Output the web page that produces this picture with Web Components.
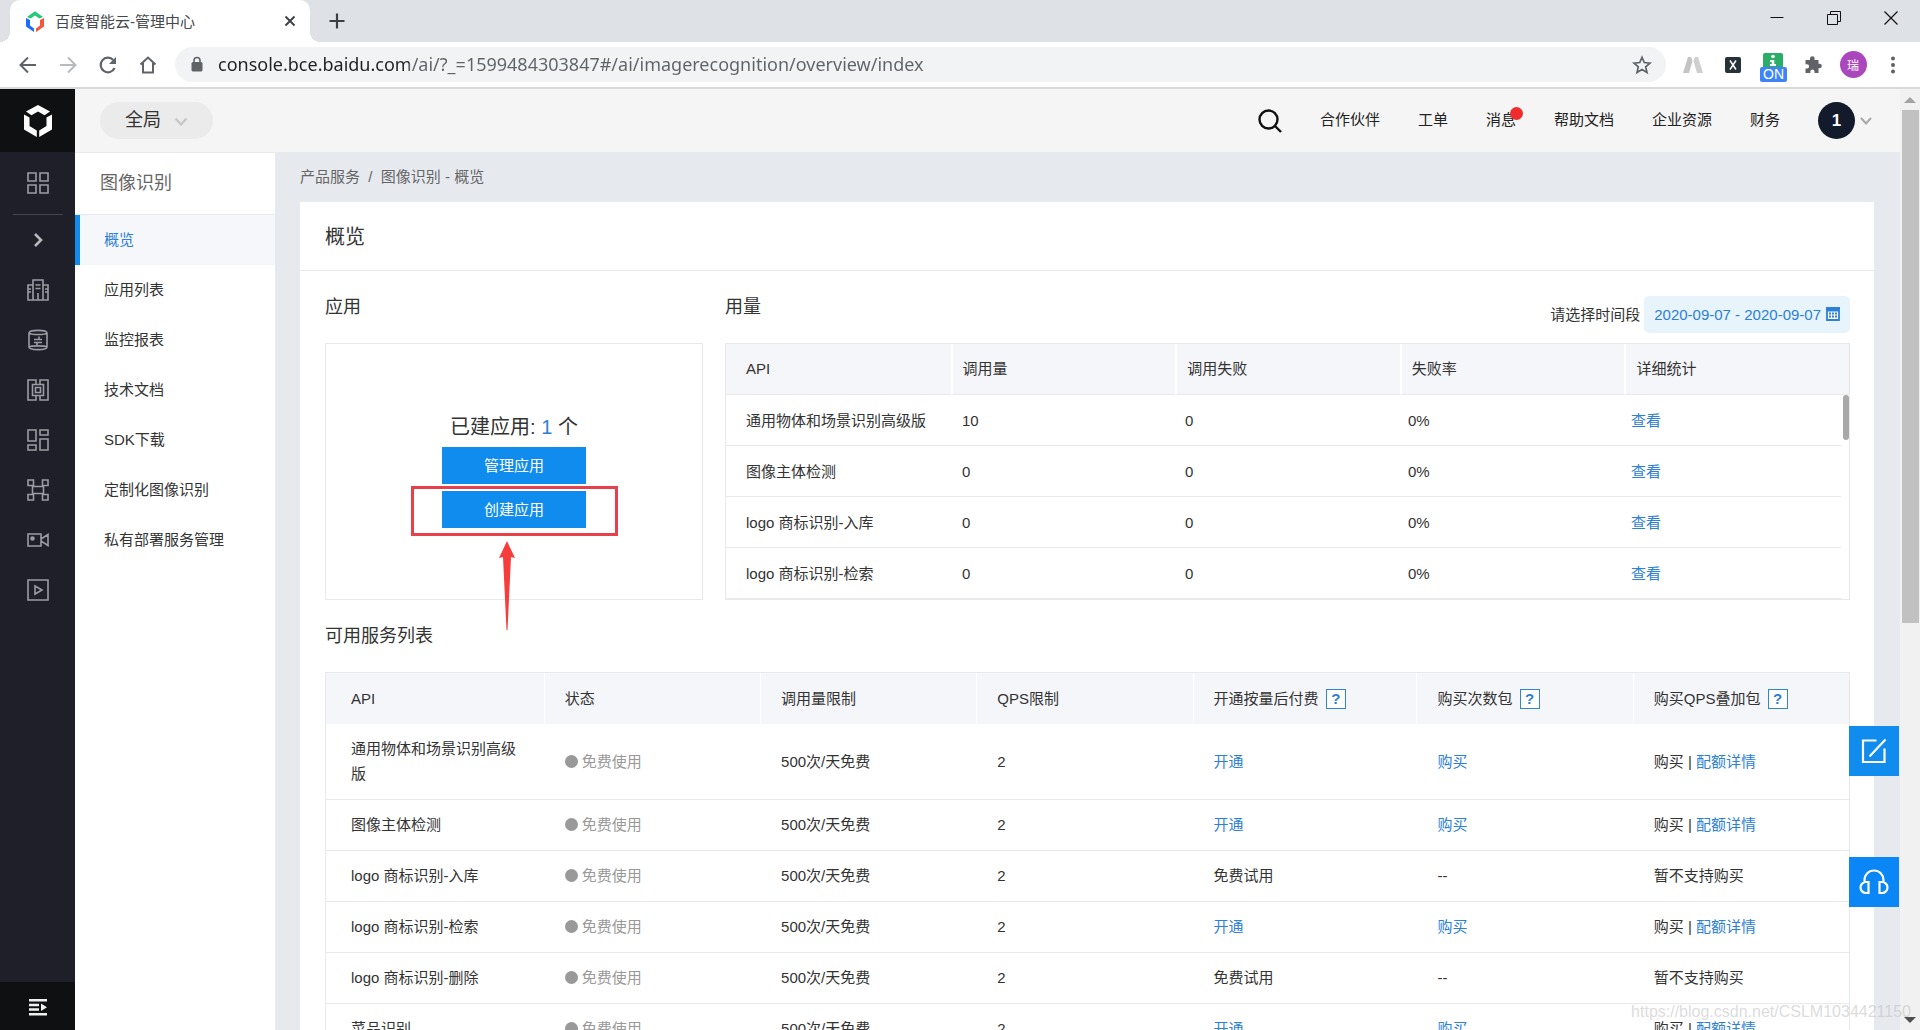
<!DOCTYPE html>
<html lang="zh-CN">
<head>
<meta charset="utf-8">
<title>百度智能云-管理中心</title>
<style>
  html, body { height: 100%; margin: 0; }
  body {
    font-family: "Liberation Sans", "Noto Sans CJK SC", sans-serif;
    font-size: 15px; line-height: 25px; color: #333;
    overflow: hidden; background: #fff;
    --blue: #108cee; --link: #2c80d8; --line: #e8e9eb; --head: #f5f6fa;
  }
</style>
</head>
<body>
<console-app></console-app>

<script>
const define = (name, html, setup) => {
  const template = document.createElement('template');
  template.innerHTML = html;
  customElements.define(name, class extends HTMLElement {
    constructor() {
      super();
      this.attachShadow({ mode: 'open' }).append(template.content.cloneNode(true));
    }
    connectedCallback() { if (setup) setup(this, this.shadowRoot); }
  });
};

/* ---------- browser window ---------- */
define('tab-strip', `
<style>
  :host { display: flex; height: 42px; background: #dee1e6; align-items: center; color: #3c4043; }
  button { border: 0; background: none; padding: 0; display: grid; place-items: center; color: inherit; }
  .tab { position: relative; margin-left: 10px; width: 300px; height: 42px; box-sizing: border-box; background: #fff;
    border-radius: 10px 10px 0 0; display: flex; align-items: center; padding: 0 11px 0 15px; gap: 10px; }
  .tab::before, .tab::after { content: ""; position: absolute; bottom: 0; width: 10px; height: 10px; }
  .tab::before { left: -10px; background: radial-gradient(circle at 0 0, transparent 10px, #fff 10px); }
  .tab::after { right: -10px; background: radial-gradient(circle at 100% 0, transparent 10px, #fff 10px); }
  .title { flex: 1; white-space: nowrap; color: #45484c; }
  .new { margin-left: 17px; width: 20px; height: 20px; }
  .win { margin-left: auto; display: flex; padding: 0 1px 6px 0; }
  .win button { width: 57px; height: 36px; color: #111; }
</style>
<div class="tab">
  <svg width="20" height="22" viewBox="0 0 20 22"><path d="M2 7 10 1.200 18 7 14.500 8.500 10 5.500 5.500 8.500Z" fill="#24c878"/><path d="M1 8 5 10V15.500L9 18.500V22L1 16.500Z" fill="#1a6dff"/><path d="M19 8 15 10V15.500L11 18.500V22L19 16.500Z" fill="#f5553a"/></svg>
  <span class="title">百度智能云-管理中心</span>
  <button aria-label="关闭标签页"><svg width="18" height="18" viewBox="0 0 18 18"><path d="M4.500 4.500 13.500 13.500M13.500 4.500 4.500 13.500" stroke="currentColor" stroke-width="1.900"/></svg></button>
</div>
<button class="new" aria-label="新标签页"><svg width="18" height="18" viewBox="0 0 18 18"><path d="M9 1.500V16.500M1.500 9H16.500" stroke="currentColor" stroke-width="2.200"/></svg></button>
<div class="win">
  <button aria-label="最小化"><svg width="14" height="14" viewBox="0 0 14 14"><path d="M.5 6.500H13.500" stroke="currentColor"/></svg></button>
  <button aria-label="还原"><svg width="14" height="14" viewBox="0 0 14 14" fill="none" stroke="currentColor"><path d="M.5 3.500H10.500V13.500H.5ZM3.500 3.500V.5H13.500V10.500H10.500"/></svg></button>
  <button aria-label="关闭"><svg width="14" height="14" viewBox="0 0 14 14"><path d="M.5 .5 13.500 13.500M13.500 .5 .5 13.500" stroke="currentColor" stroke-width="1.200"/></svg></button>
</div>`);

define('address-bar', `
<style>
  :host { display: flex; height: 45px; align-items: center; background: #fff; border-bottom: 2px solid #d8d9db; color: #5f6368; padding-left: 8px; padding-right: 7px; }
  button { border: 0; background: none; padding: 0; width: 40px; height: 35px; display: grid; place-items: center; color: inherit; }
  .off { color: #b8babd; }
  .box { flex: 1; display: flex; align-items: center; height: 35px; margin-left: 7px; margin-right: 7px; border-radius: 18px; background: #f1f3f4; padding: 0 4px 0 15px; gap: 14px; }
  input { flex: 1; min-width: 0; border: 0; outline: 0; padding: 0 0 2px; height: 33px; font: 18px "Noto Sans", "Open Sans", sans-serif;
    color: #5f6368; background: linear-gradient(90deg, #202124 191px, #5f6368 191px) text; -webkit-text-fill-color: transparent; }
  .on { position: relative; }
  .badge { position: absolute; left: 7px; top: 20px; width: 27px; height: 15px; border-radius: 2px; background: #3f83f8; color: #fff; font: 14px/15px "Liberation Sans", sans-serif; text-align: center; }
  .me span { width: 27px; height: 27px; border-radius: 50%; background: #ab47bc; color: #fff; font: 12px/27px "Noto Sans CJK SC", sans-serif; }
</style>
<button aria-label="后退"><svg width="20" height="20" viewBox="0 0 20 20" fill="none" stroke="currentColor" stroke-width="2"><path d="M18 10H3M10 2.500 2.500 10 10 17.500"/></svg></button>
<button class="off" aria-label="前进"><svg width="20" height="20" viewBox="0 0 20 20" fill="none" stroke="currentColor" stroke-width="2"><path d="M2 10H17M10 2.500 17.500 10 10 17.500"/></svg></button>
<button aria-label="重新加载"><svg width="20" height="20" viewBox="0 0 20 20" fill="none" stroke="currentColor" stroke-width="2.200"><path d="M16.600 13A7.300 7.300 0 1 1 15.300 5"/><path d="M18 2V9H11Z" fill="currentColor" stroke="none"/></svg></button>
<button aria-label="主页"><svg width="18" height="20" viewBox="0 0 18 20" fill="none" stroke="currentColor" stroke-width="2"><path d="M1.500 9.500 9 2.500 16.500 9.500M4 8V17.500H14V8"/></svg></button>
<div class="box">
  <svg width="14" height="17" viewBox="0 0 14 17"><rect x="1.500" y="6" width="11" height="9.500" rx="1.500" fill="currentColor"/><path d="M4 6.500V4.500A3 3 0 0 1 10 4.500V6.500" fill="none" stroke="currentColor" stroke-width="1.600"/></svg>
  <input aria-label="地址" value="console.bce.baidu.com/ai/?_=1599484303847#/ai/imagerecognition/overview/index">
  <button aria-label="收藏"><svg width="20" height="20" viewBox="0 0 20 20" fill="none" stroke="currentColor" stroke-width="1.700"><path d="M10 2.300 12.300 7.500 18 8.100 13.700 11.900 15 17.500 10 14.500 5 17.500 6.300 11.900 2 8.100 7.700 7.500Z"/></svg></button>
</div>
<button aria-label="扩展程序"><svg width="20" height="18" viewBox="0 0 20 18"><path d="M5 1H8L9.500 5 6 17H0Z" fill="#c4c4c4"/><path d="M15 1H12L10.500 5 14 17H20Z" fill="#cfcfcf"/></svg></button>
<button aria-label="扩展程序 X"><svg width="16" height="16" viewBox="0 0 16 16"><rect width="16" height="16" rx="2" fill="#263238"/><path d="M5 3.500 11 12.500M11 3.500 5 12.500" stroke="#fff" stroke-width="1.500"/></svg></button>
<button class="on" aria-label="扩展程序 ON"><svg width="20" height="24" viewBox="0 0 20 24"><rect y="0" width="20" height="18" rx="2" fill="#2aad66"/><circle cx="10" cy="3.500" r="1.800" fill="#fff"/><path d="M7 7H11.300V11H13V13H7V11H8.700V9H7Z" fill="#fff"/></svg><span class="badge">ON</span></button>
<button aria-label="扩展"><svg width="20" height="20" viewBox="0 0 20 20"><path d="M7 3.500A2.300 2.300 0 0 1 11.600 3.500V5H15.500V8.700H16.500A2.300 2.300 0 0 1 16.500 13.300H15.500V18H11.500V16.500A2.100 2.100 0 0 0 7.300 16.500V18H2.500V13.500H4A2.100 2.100 0 0 0 4 9.300H2.500V5H7Z" fill="currentColor"/></svg></button>
<button class="me" aria-label="个人资料"><span>瑞</span></button>
<button aria-label="菜单"><svg width="6" height="18" viewBox="0 0 6 18" fill="currentColor"><circle cx="3" cy="2.500" r="2"/><circle cx="3" cy="9" r="2"/><circle cx="3" cy="15.500" r="2"/></svg></button>`);

define('window-scrollbar', `
<style>
  :host { display: flex; flex-direction: column; width: 20px; background: #f1f1f1; align-items: center; box-sizing: border-box; }
  i { display: block; width: 0; height: 0; border: 6px solid transparent; }
  .up { border-top: 0; border-bottom-color: #a3a3a3; margin: 8px 0 7px; }
  .down { border-bottom: 0; border-top-color: #505050; margin: 7px 0; }
  .track { flex: 1; width: 17px; }
  .thumb { height: 57%; background: #c1c1c1; }
</style>
<i class="up"></i><div class="track"><div class="thumb"></div></div><i class="down"></i>`);

/* ---------- console shell ---------- */
define('icon-rail', `
<style>
  :host { display: flex; flex-direction: column; width: 75px; background: #1e1f29; color: #9b9ca3; }
  a { color: inherit; display: grid; place-items: center; height: 50px; }
  .logo { height: 63px; background: #0f1012; color: #fff; }
  .grid { height: 62px; }
  hr { width: 50px; height: 1px; margin: 0 auto; border: 0; background: #43444e; }
  svg { display: block; }
  button { margin-top: auto; border: 0; padding: 2px 0 0; height: 48px; background: #0f1012; color: #f0f0f0; display: grid; place-items: center; }
</style>
<a class="logo" href="#" aria-label="百度智能云"><svg width="32" height="34" viewBox="0 0 32 34" fill="currentColor"><path d="M4 7.500 16 1 28 7.500 22.500 11.200 16 7.500 9.500 11.200Z"/><path d="M2 10.500 7.500 13.500V22L14.800 26.500V33L2 25.500Z"/><path d="M30 10.500 24.500 13.500V22L17.200 26.500V33L30 25.500Z"/></svg></a>
<a class="grid" href="#" aria-label="产品"><svg width="22" height="22" viewBox="0 0 22 22" fill="none" stroke="currentColor" stroke-width="1.600"><path d="M1 1H9V9H1ZM13 1H21V9H13ZM1 13H9V21H1ZM13 13H21V21H13Z"/></svg></a>
<hr>
<a href="#" aria-label="展开"><svg width="22" height="22" viewBox="0 0 22 22" fill="none" stroke="#b8b9be" stroke-width="2.600"><path d="M8 5 14 11 8 17"/></svg></a>
<a href="#" aria-label="云服务器"><svg width="22" height="22" viewBox="0 0 22 22" fill="none" stroke="currentColor" stroke-width="1.600"><path d="M1 6H6V21H1ZM6 1H16V21H6ZM16 6H21V21H16ZM8.500 6H13.500M8.500 9.500H13.500M11 14V21M1 10H4M18 10H21M1 13H4M18 13H21"/></svg></a>
<a href="#" aria-label="数据库"><svg width="22" height="22" viewBox="0 0 22 22" fill="none" stroke="currentColor" stroke-width="1.600"><path d="M2 4C2 .5 20 .5 20 4V18C20 21.500 2 21.500 2 18ZM2 4C4 6 18 6 20 4M2 18C4 16.500 18 16.500 20 18M12 7.500V10.500M7 10.500H15M7 13.500H15M10 13.500V16"/></svg></a>
<a href="#" aria-label="私有网络"><svg width="22" height="22" viewBox="0 0 22 22" fill="none" stroke="currentColor" stroke-width="1.600"><path d="M5 1H1V21H9V17M17 1H21V21H13V17M5 1H9V5M17 1H13V5M5.500 5.500H16.500V16.500H5.500ZM8.500 8.500H13.500V13.500H8.500Z"/></svg></a>
<a href="#" aria-label="应用"><svg width="22" height="22" viewBox="0 0 22 22" fill="none" stroke="currentColor" stroke-width="1.600"><path d="M1 1H9V12H1ZM13 1H21V6H13ZM1 16H9V21H1ZM13 10H21V21H13Z"/></svg></a>
<a href="#" aria-label="集群"><svg width="22" height="22" viewBox="0 0 22 22" fill="none" stroke="currentColor" stroke-width="1.600"><path d="M1 1H6.500V6.500H1ZM15.500 1H21V6.500H15.500ZM1 15.500H6.500V21H1ZM15.500 15.500H21V21H15.500ZM5.500 6.500V15.500M16.500 6.500V15.500M5.500 7.500H16.500M5.500 14.500H16.500"/></svg></a>
<a href="#" aria-label="视频"><svg width="22" height="22" viewBox="0 0 22 22" fill="none" stroke="currentColor" stroke-width="1.600"><path d="M1 5H14V17H1ZM14 10 21 5.500V16.500L14 12"/><circle cx="5.500" cy="9.500" r="1.500" fill="currentColor"/></svg></a>
<a href="#" aria-label="播放"><svg width="22" height="22" viewBox="0 0 22 22" fill="none" stroke="currentColor" stroke-width="1.600"><path d="M1 1H21V21H1ZM8 7 15 11 8 15Z"/></svg></a>
<button aria-label="收起菜单"><svg width="18" height="17" viewBox="0 0 18 17" fill="currentColor"><path d="M0 0H18V2.500H0ZM0 4.700H10V7.200H0ZM0 9.300H10V11.800H0ZM0 14H18V16.500H0ZM12 4.500 18 8.300 12 12Z"/></svg></button>`);

define('console-header', `
<style>
  :host { display: flex; align-items: center; height: 63px; background: #f5f5f5; border-bottom: 1px solid #e9eaeb; padding: 0 28px 0 25px; color: #222; box-sizing: content-box; }
  .region { position: relative; }
  select { appearance: none; border: 0; outline: 0; width: 113px; height: 37px; border-radius: 19px; background: #ebebeb; color: #333; padding: 0 0 0 25px; font: inherit; font-size: 18px; }
  .region svg { position: absolute; right: 25px; top: 15px; pointer-events: none; }
  nav { margin-left: auto; display: flex; align-items: center; gap: 38px; }
  a { color: inherit; text-decoration: none; display: block; white-space: nowrap; padding-bottom: 2px; }
  .msg { position: relative; }
  .msg::after { content: ""; position: absolute; right: -7px; top: 0; width: 13px; height: 13px; border-radius: 50%; background: #f02d2d; }
  button { border: 0; background: none; padding: 0; display: flex; align-items: center; gap: 5px; color: #fff; }
  .avatar { width: 37px; height: 37px; border-radius: 50%; background: #121a2b; font: bold 17px/37px "Liberation Sans", sans-serif; }
</style>
<div class="region"><select aria-label="区域"><option>全局</option></select><svg width="14" height="10" viewBox="0 0 14 10" fill="none" stroke="#c8c8c8" stroke-width="2.400"><path d="M1.500 1.500 7 7.500 12.500 1.500"/></svg></div>
<nav>
  <button aria-label="搜索"><svg width="24" height="24" viewBox="0 0 24 24" fill="none" stroke="#111" stroke-width="2.400"><circle cx="10.500" cy="10.500" r="9"/><path d="M17 17 23 23"/></svg></button>
  <a href="#">合作伙伴</a><a href="#">工单</a><a href="#" class="msg">消息</a><a href="#">帮助文档</a><a href="#">企业资源</a><a href="#">财务</a>
  <button aria-label="账号"><span class="avatar">1</span><svg width="12" height="8" viewBox="0 0 12 8" fill="none" stroke="#a8a8a8" stroke-width="2"><path d="M1 1 6 6.500 11 1"/></svg></button>
</nav>`);

define('side-nav', `
<style>
  :host { display: block; width: 200px; background: #fff; }
  h2 { margin: 0; padding-left: 25px; font-size: 18px; font-weight: 400; line-height: 61px; color: #666; border-bottom: 1px solid var(--line); }
</style>
<h2>图像识别</h2><slot></slot>`);

define('side-item', `
<style>
  :host { display: block; }
  a { display: block; line-height: 50px; padding-left: 24px; border-left: 5px solid transparent; color: #333; text-decoration: none; }
  :host([active]) a { border-color: var(--blue); background: #f5f7fb; color: var(--link); }
</style>
<a href="#"><slot></slot></a>`);

define('float-tools', `
<style>
  :host { position: absolute; right: 1px; top: 573px; display: flex; flex-direction: column; gap: 81px; }
  button { width: 50px; height: 50px; padding: 0; border: 0; background: var(--blue); display: grid; place-items: center; }
  .help { background: #0a86f6; }
</style>
<button aria-label="反馈"><svg width="26" height="26" viewBox="0 0 26 26" fill="none" stroke="#fff" stroke-width="2.200"><path d="M15.500 2.500H2V24H23.500V10.500M24.500 1.500 8.500 18.500"/></svg></button>
<button class="help" aria-label="客服"><svg width="32" height="28" viewBox="0 0 32 28" fill="none" stroke="#fff" stroke-width="2.200"><path d="M6.500 14V12A9.500 9.500 0 0 1 25.500 12V14M10.500 14V25H8A5.500 5.500 0 0 1 8 14ZM21.500 14V25H24A5.500 5.500 0 0 0 24 14Z"/></svg></button>`);

/* ---------- overview content ---------- */
define('app-summary', `
<style>
  :host { display: flex; flex-direction: column; align-items: center; position: relative; height: 257px; box-sizing: border-box; border: 1px solid var(--line); padding-top: 68px; }
  p { margin: 0 0 5px; font-size: 20px; line-height: 30px; }
  p a { color: var(--link); text-decoration: none; }
  button { width: 144px; height: 37px; margin-bottom: 7px; border: 0; padding: 0; background: var(--blue); color: #fff; font: inherit; }
  .mark { position: absolute; left: 50%; top: 142px; width: 201px; height: 44px; margin-left: -103px; border: 3px solid #e8404a; }
  .arrow { position: absolute; left: 50%; top: 197px; margin-left: -15px; }
</style>
<p>已建应用: <a href="#">1</a> 个</p>
<button>管理应用</button><button>创建应用</button>
<div class="mark"></div>
<svg class="arrow" width="16" height="90" viewBox="0 0 16 90"><path d="M8 0 16 17 12 16 8.500 89H7.500L4 16 0 17Z" fill="#f73c3c"/></svg>`);

define('date-range', `
<style>
  :host { display: flex; align-items: center; gap: 4px; }
  button { display: flex; align-items: center; gap: 5px; height: 37px; border: 0; border-radius: 5px; padding: 0 10px; background: #e8f4fc; color: var(--link); font: inherit; white-space: nowrap; }
</style>
<label for="range">请选择时间段</label>
<button id="range">2020-09-07 - 2020-09-07 <svg width="14" height="14" viewBox="0 0 14 14"><path d="M0 0H14V3H0Z" fill="#2c80d8"/><path d="M1 3.500H13V13H1Z" fill="#fff" stroke="#2c80d8" stroke-width="1.800"/><path d="M3 6.500H11M3 9.500H11" stroke="#2c80d8" stroke-width="2" stroke-dasharray="2 1"/></svg></button>`);

const usage = [['通用物体和场景识别高级版', '10'], ['图像主体检测', '0'], ['logo 商标识别-入库', '0'], ['logo 商标识别-检索', '0']];
define('usage-table', `
<style>
  :host { display: block; height: 257px; box-sizing: border-box; border: 1px solid var(--line); overflow: hidden; }
  table { width: 100%; table-layout: fixed; border-collapse: separate; border-spacing: 0; }
  th, td { text-align: left; font-weight: 400; height: 50px; padding: 0 13px; border-bottom: 1px solid var(--line); white-space: nowrap; }
  th { background: var(--head); height: 48px; padding: 0 10px 2px; }
  th + th { border-left: 2px solid #fff; }
  th:first-child, td:first-child { padding-left: 20px; padding-right: 0; }
  a { color: var(--link); text-decoration: none; }
  .body { display: flex; gap: 2px; }
  .thumb { flex: none; width: 6px; height: 45px; border-radius: 3px; background: #a9a9a9; }
</style>
<table><thead><tr><th>API</th><th>调用量</th><th>调用失败</th><th>失败率</th><th>详细统计</th></tr></thead></table>
<div class="body"><table><tbody></tbody></table><div class="thumb"></div></div>`,
(el, root) => {
  root.querySelector('tbody').innerHTML = usage.map(([name, n]) =>
    `<tr><td>${name}</td><td>${n}</td><td>0</td><td>0%</td><td><a href="#">查看</a></td></tr>`).join('');
});

define('help-tip', `
<style>
  :host { display: inline-block; vertical-align: top; margin-left: 3px; }
  button { display: block; box-sizing: border-box; width: 20px; height: 20px; margin: 3px 0 2px; padding: 0; border: 1px solid #2f86cc; background: #fff; color: var(--link); font: bold 15px/18px "Liberation Sans", sans-serif; text-align: center; }
</style>
<button aria-label="说明">?</button>`);

define('service-status', `
<style>
  :host { display: flex; align-items: center; gap: 4px; color: #999; }
  :host::before { content: ""; width: 13px; height: 13px; border-radius: 50%; background: #999; }
</style>
<slot></slot>`);

const services = [['通用物体和场景识别高级版', 1], ['图像主体检测', 1], ['logo 商标识别-入库', 0], ['logo 商标识别-检索', 1], ['logo 商标识别-删除', 0], ['菜品识别', 1]];
define('service-table', `
<style>
  :host { display: block; }
  table { width: 100%; table-layout: fixed; border-collapse: separate; border-spacing: 0; border: 1px solid var(--line); border-bottom: 0; }
  th, td { text-align: left; font-weight: 400; padding: 12px 20px 13px; line-height: 25px; }
  td { border-bottom: 1px solid var(--line); }
  th { background: var(--head); padding-top: 13px; white-space: nowrap; }
  td + td { padding-left: 21px; }
  th + th { border-left: 1px solid #fff; }
  th:first-child, td:first-child { padding-left: 25px; }
  a { color: var(--link); text-decoration: none; }
</style>
<table>
<colgroup><col style="width:14.300%"><col style="width:14.200%"><col style="width:14.200%"><col style="width:14.200%"><col style="width:14.700%"><col style="width:14.200%"><col></colgroup>
<thead><tr><th>API</th><th>状态</th><th>调用量限制</th><th>QPS限制</th><th>开通按量后付费 <help-tip></help-tip></th><th>购买次数包 <help-tip></help-tip></th><th>购买QPS叠加包 <help-tip></help-tip></th></tr></thead>
<tbody></tbody></table>`,
(el, root) => {
  root.querySelector('tbody').innerHTML = services.map(([name, paid]) =>
    `<tr><td>${name}</td><td><service-status>免费使用</service-status></td><td>500次/天免费</td><td>2</td>` + (paid
      ? '<td><a href="#">开通</a></td><td><a href="#">购买</a></td><td>购买 | <a href="#">配额详情</a></td></tr>'
      : '<td>免费试用</td><td>--</td><td>暂不支持购买</td></tr>')).join('');
});

define('overview-page', `
<style>
  :host { display: block; padding: 0 26px 0 25px; background: #e6eaef; overflow: hidden; }
  .crumb { line-height: 47px; padding-bottom: 2px; color: #666; white-space: pre; }
  .crumb a { color: inherit; text-decoration: none; }
  .card { background: #fff; min-height: 100%; }
  h1 { margin: 0; padding: 2px 0 0 25px; font-size: 20px; font-weight: 400; line-height: 66px; border-bottom: 1px solid var(--line); }
  .body { padding: 0 24px 0 25px; }
  .top { display: grid; grid-template-columns: 378px 1fr; column-gap: 22px; }
  .bar { display: flex; justify-content: space-between; height: 72px; }
  .bar date-range { padding-top: 14px; }
  h2 { margin: 0; font-size: 18px; font-weight: 400; line-height: 72px; }
</style>
<nav class="crumb" aria-label="路径"><a href="#">产品服务</a>  /  <a href="#">图像识别 - 概览</a></nav>
<div class="card">
  <h1>概览</h1>
  <div class="body">
    <div class="top">
      <section><div class="bar"><h2>应用</h2></div><app-summary></app-summary></section>
      <section><div class="bar"><h2>用量</h2><date-range></date-range></div><usage-table></usage-table></section>
    </div>
    <section><h2>可用服务列表</h2><service-table></service-table></section>
  </div>
</div>`);

define('console-app', `
<style>
  :host { display: flex; flex-direction: column; height: 100vh; overflow: hidden; }
  .page { flex: 1; min-height: 0; display: flex; position: relative; }
  .main { flex: 1; min-width: 0; display: flex; flex-direction: column; }
  .work { flex: 1; min-height: 0; display: flex; position: relative; }
  overview-page { flex: 1; min-width: 0; }
  .mark { position: absolute; right: 9px; bottom: 8px; font-size: 16px; line-height: 20px; color: rgba(190, 190, 190, .55); }
</style>
<tab-strip></tab-strip>
<address-bar></address-bar>
<div class="page">
  <icon-rail></icon-rail>
  <div class="main">
    <console-header></console-header>
    <div class="work">
      <side-nav>
        <side-item active>概览</side-item><side-item>应用列表</side-item><side-item>监控报表</side-item><side-item>技术文档</side-item>
        <side-item>SDK下载</side-item><side-item>定制化图像识别</side-item><side-item>私有部署服务管理</side-item>
      </side-nav>
      <overview-page></overview-page>
      <float-tools></float-tools>
    </div>
  </div>
  <window-scrollbar></window-scrollbar>
  <div class="mark">https://blog.csdn.net/CSLM1034421150</div>
</div>`);
</script>
</body>
</html>
